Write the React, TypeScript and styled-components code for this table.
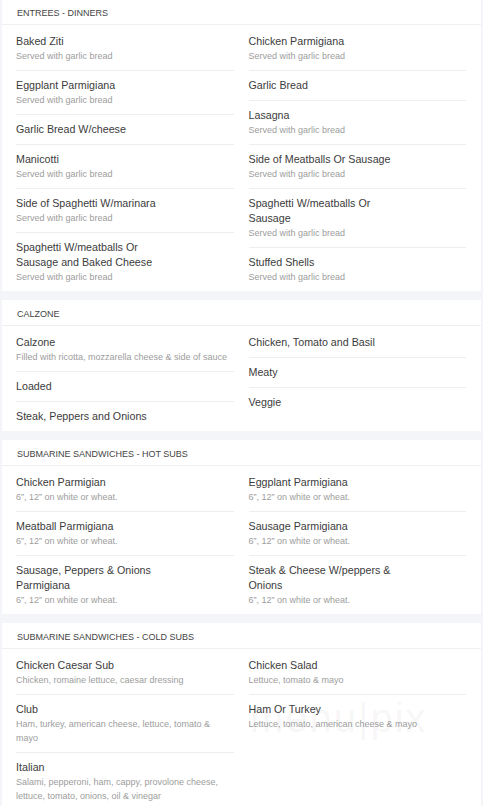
import styled, { createGlobalStyle } from "styled-components";

const GlobalStyle = createGlobalStyle`
    html, body {
        margin: 0;
        padding: 0;
        background: #f4f5f8;
        font-family: "Liberation Sans", Arial, sans-serif;
    }
`

const Page = styled.div`
    display: flex;
    flex-direction: column;
    gap: 9px;
    margin-top: -1px;
    padding: 0 2px;
    position: relative;
`

const Card = styled.section`
    background: #fff;
    display: flex;
    flex-direction: column;
`

const CardHeader = styled.h2`
    margin: 0;
    height: 22px;
    line-height: 22px;
    padding: 3px 15px 0;
    font-size: 9px;
    font-weight: 400;
    color: #444;
    text-transform: uppercase;
    border-bottom: 1px solid #eeeff2;
`

const Columns = styled.div`
    display: flex;
    gap: 15px;
    padding: 2px 15px 0 14px;
`

const Column = styled.ul`
    flex: 1;
    min-width: 0;
    list-style: none;
    margin: 0;
    padding: 0;
`

const Item = styled.li`
    padding: 7px 0;
    border-bottom: 1px solid #eeeeee;

    &:last-child {
        border-bottom: none;
    }
`

const ItemTitle = styled.div`
    max-width: 152px;
    font-size: 10.7px;
    line-height: 15px;
    color: #3c3c3c;
`

const ItemDesc = styled.div`
    max-width: 214px;
    font-size: 9px;
    line-height: 14px;
    color: #9d9d9d;
`

const Watermark = styled.div`
    position: absolute;
    left: 250px;
    top: 697px;
    font-size: 40px;
    letter-spacing: 2px;
    color: rgba(0, 0, 0, 0.05);
    pointer-events: none;
`

type MenuItem = {
    title: string,
    desc?: string,
}

type Section = {
    name: string,
    left: MenuItem[],
    right: MenuItem[],
}

const garlic = "Served with garlic bread"
const subs = "6\u201D, 12\u201D on white or wheat."

const sections: Section[] = [
    {
        name: "Entrees - Dinners",
        left: [
            { title: "Baked Ziti", desc: garlic },
            { title: "Eggplant Parmigiana", desc: garlic },
            { title: "Garlic Bread W/cheese" },
            { title: "Manicotti", desc: garlic },
            { title: "Side of Spaghetti W/marinara", desc: garlic },
            { title: "Spaghetti W/meatballs Or Sausage and Baked Cheese", desc: garlic },
        ],
        right: [
            { title: "Chicken Parmigiana", desc: garlic },
            { title: "Garlic Bread" },
            { title: "Lasagna", desc: garlic },
            { title: "Side of Meatballs Or Sausage", desc: garlic },
            { title: "Spaghetti W/meatballs Or Sausage", desc: garlic },
            { title: "Stuffed Shells", desc: garlic },
        ],
    },
    {
        name: "Calzone",
        left: [
            { title: "Calzone", desc: "Filled with ricotta, mozzarella cheese & side of sauce" },
            { title: "Loaded" },
            { title: "Steak, Peppers and Onions" },
        ],
        right: [
            { title: "Chicken, Tomato and Basil" },
            { title: "Meaty" },
            { title: "Veggie" },
        ],
    },
    {
        name: "Submarine Sandwiches - Hot Subs",
        left: [
            { title: "Chicken Parmigian", desc: subs },
            { title: "Meatball Parmigiana", desc: subs },
            { title: "Sausage, Peppers & Onions Parmigiana", desc: subs },
        ],
        right: [
            { title: "Eggplant Parmigiana", desc: subs },
            { title: "Sausage Parmigiana", desc: subs },
            { title: "Steak & Cheese W/peppers & Onions", desc: subs },
        ],
    },
    {
        name: "Submarine Sandwiches - Cold Subs",
        left: [
            { title: "Chicken Caesar Sub", desc: "Chicken, romaine lettuce, caesar dressing" },
            { title: "Club", desc: "Ham, turkey, american cheese, lettuce, tomato & mayo" },
            { title: "Italian", desc: "Salami, pepperoni, ham, cappy, provolone cheese, lettuce, tomato, onions, oil & vinegar" },
        ],
        right: [
            { title: "Chicken Salad", desc: "Lettuce, tomato & mayo" },
            { title: "Ham Or Turkey", desc: "Lettuce, tomato, american cheese & mayo" },
        ],
    },
]

const MenuColumn = ({ items }: { items: MenuItem[] }) => (
    <Column>
        {items.map((item) => (
            <Item key={item.title}>
                <ItemTitle>{item.title}</ItemTitle>
                {item.desc && <ItemDesc>{item.desc}</ItemDesc>}
            </Item>
        ))}
    </Column>
)

export default function App() {
    return (
        <>
            <GlobalStyle />
            <Page>
                {sections.map((section) => (
                    <Card key={section.name}>
                        <CardHeader>{section.name}</CardHeader>
                        <Columns>
                            <MenuColumn items={section.left} />
                            <MenuColumn items={section.right} />
                        </Columns>
                    </Card>
                ))}
                <Watermark>menu|pix</Watermark>
            </Page>
        </>
    )
}
